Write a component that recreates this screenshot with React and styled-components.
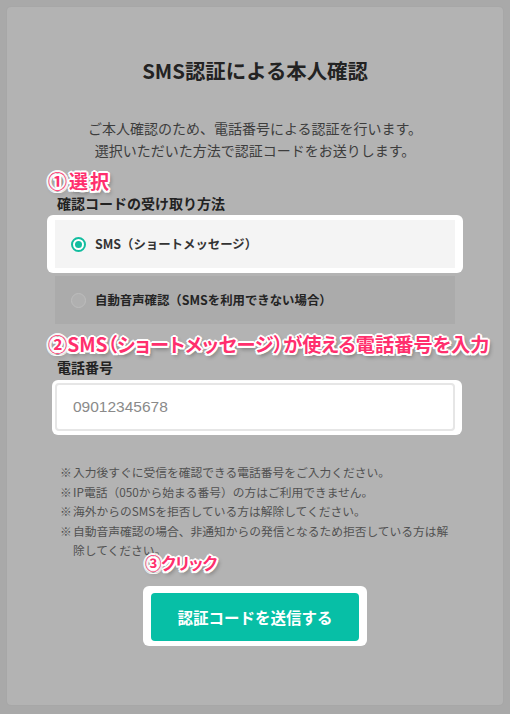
import React from "react";
import styled, { createGlobalStyle } from "styled-components";

const Global = createGlobalStyle`
  html, body { margin: 0; padding: 0; }
  body {
    background: #a9a9a9;
    font-family: "Noto Sans CJK JP", "Noto Sans", sans-serif;
  }
  * { box-sizing: border-box; }
`;

const Page = styled.div`
  padding: 7px 7px 9px;
`;

const Card = styled.main`
  position: relative;
  isolation: isolate;
  background: #b3b3b3;
  border-radius: 4px;
  padding: 49px 48px 64px;
  box-shadow: 0 0 2px rgba(0, 0, 0, 0.05);
`;

const Title = styled.h1`
  margin: 0;
  font-size: 20.4px;
  line-height: 28px;
  font-weight: 700;
  color: #232323;
  text-align: center;
`;

const Desc = styled.p`
  margin: 33px 0 0;
  font-size: 14px;
  line-height: 22px;
  color: #3d3d3d;
  text-align: center;
`;

const Section = styled.section`
  position: relative;
  margin-top: ${(p) => p.$mt}px;
`;

const Label = styled.div`
  font-size: 14px;
  line-height: 20px;
  font-weight: 700;
  color: #222;
  padding-left: 2px;
`;

const Highlight = styled.div`
  position: relative;
  margin-top: ${(p) => p.$mt || 0}px;
  &::before {
    content: "";
    position: absolute;
    top: -${(p) => p.$t}px;
    right: -${(p) => p.$r}px;
    bottom: -${(p) => p.$b}px;
    left: -${(p) => p.$l}px;
    background: #fff;
    border-radius: 6px;
    z-index: -1;
  }
`;

const OptionList = styled.div`
  margin-top: 7px;
  display: flex;
  flex-direction: column;
  gap: 8px;
`;

const Option = styled.div`
  height: 48px;
  display: flex;
  align-items: center;
  gap: 9px;
  padding-left: 16px;
  background: ${(p) => (p.$active ? "#f4f4f4" : "#ababab")};
  font-size: 12.4px;
  font-weight: 700;
  color: ${(p) => (p.$active ? "#333" : "#242424")};
`;

const Radio = styled.span`
  position: relative;
  width: 15px;
  height: 15px;
  border-radius: 50%;
  flex: none;
  border: ${(p) => (p.$checked ? "2.5px solid #12bd9f" : "1.5px solid #bdbdbd")};
  background: ${(p) => (p.$checked ? "#fff" : "#b0b0b0")};
  &::after {
    content: "";
    display: ${(p) => (p.$checked ? "block" : "none")};
    position: absolute;
    left: 50%;
    top: 50%;
    width: 7px;
    height: 7px;
    margin: -3.5px 0 0 -3.5px;
    border-radius: 50%;
    background: #12bd9f;
  }
`;

const Input = styled.input`
  display: block;
  width: 100%;
  height: 48px;
  margin: 0;
  border: 2px solid #e6e6e6;
  border-radius: 4px;
  background: #fff;
  padding: 0 0 0 16px;
  font-family: "Liberation Sans", Arial, sans-serif;
  font-size: 15.5px;
  color: #333;
  outline: none;
  &::placeholder { color: #8a8a8a; }
`;

const Notes = styled.ul`
  list-style: none;
  margin: 31px 0 0;
  padding: 0 0 0 5px;
`;

const Note = styled.li`
  display: grid;
  grid-template-columns: 13px 1fr;
  font-size: 11.75px;
  line-height: 19.6px;
  color: #515151;
  line-break: anywhere;
`;

const ButtonRow = styled.div`
  position: relative;
  margin-top: 33px;
  display: flex;
  justify-content: center;
`;

const SubmitButton = styled.button`
  width: 208px;
  height: 48px;
  border: none;
  border-radius: 4px;
  background: #07bfa6;
  color: #fff;
  font-family: "Noto Sans CJK JP", sans-serif;
  font-size: 15.5px;
  font-weight: 700;
  cursor: pointer;
`;

const Annotation = styled.div`
  position: absolute;
  left: ${(p) => p.$x}px;
  top: ${(p) => p.$y}px;
  white-space: nowrap;
  font-size: ${(p) => p.$size}px;
  letter-spacing: ${(p) => p.$ls || 0}px;
  line-height: 24px;
  font-weight: 700;
  color: #ff2f6d;
  font-feature-settings: "palt";
  z-index: 2;
  text-shadow:
    2px 0 0 #fff, -2px 0 0 #fff, 0 2px 0 #fff, 0 -2px 0 #fff,
    1.5px 1.5px 0 #fff, -1.5px 1.5px 0 #fff, 1.5px -1.5px 0 #fff, -1.5px -1.5px 0 #fff,
    2px 3px 4px rgba(0, 0, 0, 0.45);
`;

const ButtonWrap = styled.div`
  position: relative;
`;

const notes = [
  "入力後すぐに受信を確認できる電話番号をご入力ください。",
  "IP電話（050から始まる番号）の方はご利用できません。",
  "海外からのSMSを拒否している方は解除してください。",
  "自動音声確認の場合、非通知からの発信となるため拒否している方は解除してください。",
];

export default function App() {
  return (
    <>
      <Global />
      <Page>
        <Card>
          <Title>SMS認証による本人確認</Title>
          <Desc>
            ご本人確認のため、電話番号による認証を行います。
            <br />
            選択いただいた方法で認証コードをお送りします。
          </Desc>

          <Section $mt={32}>
            <Annotation $x={-7} $y={-24} $size={19} $ls={2}>①選択</Annotation>
            <Label>確認コードの受け取り方法</Label>
            <OptionList>
              <Highlight $t={5} $r={8} $b={5} $l={8}>
                <Option $active>
                  <Radio $checked />
                  SMS（ショートメッセージ）
                </Option>
              </Highlight>
              <Option>
                <Radio />
                自動音声確認（SMSを利用できない場合）
              </Option>
            </OptionList>
          </Section>

          <Section $mt={33}>
            <Annotation $x={-7} $y={-25} $size={19.2}>
              ②SMS（ショートメッセージ）が使える電話番号を入力
            </Annotation>
            <Label>電話番号</Label>
            <Highlight $t={3} $r={7} $b={4} $l={3} $mt={6}>
              <Input type="tel" placeholder="09012345678" />
            </Highlight>
          </Section>

          <Notes>
            {notes.map((n) => (
              <Note key={n}>
                <span>※</span>
                <span>{n}</span>
              </Note>
            ))}
          </Notes>

          <ButtonRow>
            <ButtonWrap>
              <Annotation $x={-6} $y={-42} $size={16.5} $ls={-0.5}>③クリック</Annotation>
              <Highlight $t={7} $r={8} $b={5} $l={8}>
                <SubmitButton type="button">認証コードを送信する</SubmitButton>
              </Highlight>
            </ButtonWrap>
          </ButtonRow>
        </Card>
      </Page>
    </>
  );
}
